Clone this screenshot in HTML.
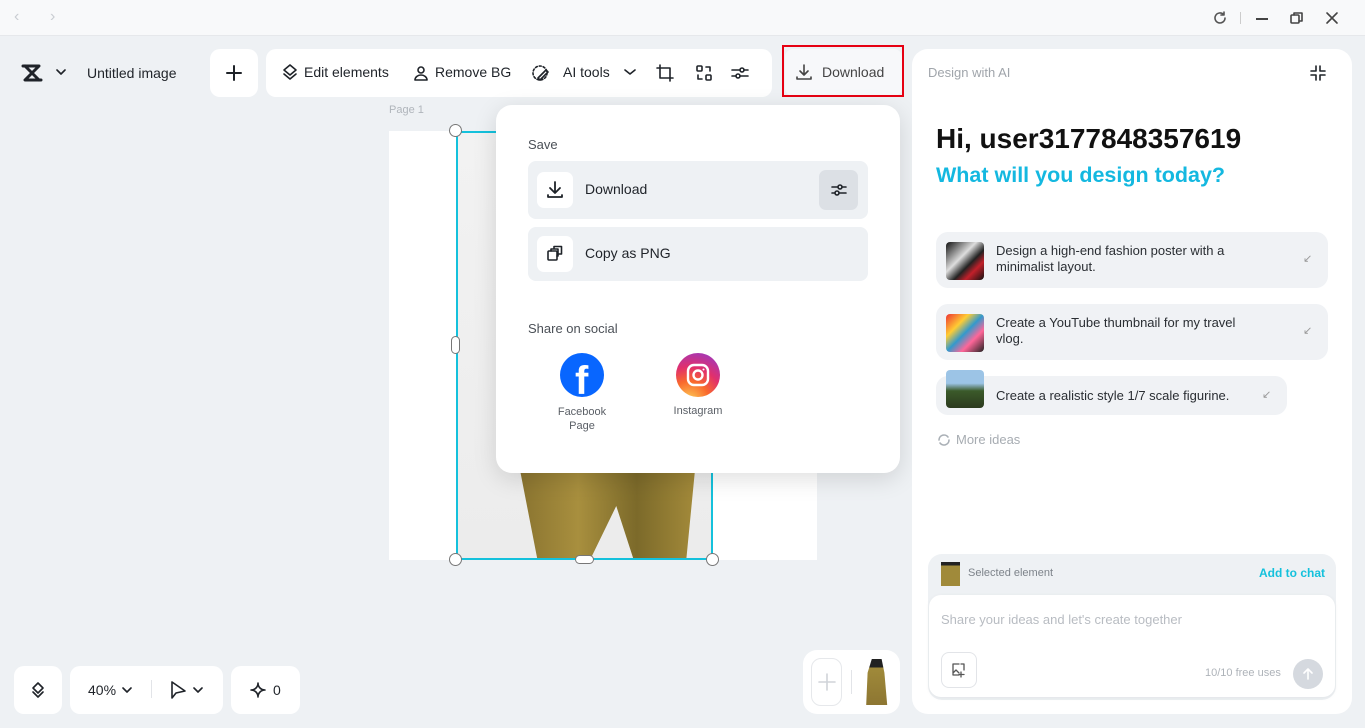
<!DOCTYPE html>
<html><head><meta charset="utf-8"><style>
*{box-sizing:border-box;margin:0;padding:0}
body{width:1365px;height:728px;overflow:hidden;background:#eef1f4;font-family:"Liberation Sans",sans-serif;position:relative;color:#1f2329}
.abs{position:absolute}
.card{position:absolute;background:#fff;border-radius:10px}
.t{position:absolute;white-space:nowrap}
svg{position:absolute;fill:none;stroke:#1f2329;stroke-width:1.6;stroke-linecap:round;stroke-linejoin:round}
</style></head><body>
<div class="abs" style="left:0;top:0;width:1365px;height:36px;background:#f8f9fa;border-bottom:1px solid #e6e8eb"></div>
<div class="t" style="left:14px;top:8px;color:#c9cdd2;font-size:16px">‹</div>
<div class="t" style="left:50px;top:8px;color:#c9cdd2;font-size:16px">›</div>
<svg style="left:1212px;top:10px" width="16" height="16" viewBox="0 0 16 16"><path d="M13 8a5 5 0 1 1-1.5-3.6M12 2v3h-3" stroke="#555"/></svg>
<div class="abs" style="left:1240px;top:12px;width:1px;height:12px;background:#ccc"></div>
<div class="abs" style="left:1256px;top:18px;width:12px;height:1.5px;background:#444"></div>
<svg style="left:1289px;top:10px" width="16" height="16" viewBox="0 0 16 16"><rect x="2" y="5" width="8" height="8" rx="1" stroke="#444"/><path d="M5 5V3h8v8h-3" stroke="#444"/></svg>
<svg style="left:1325px;top:11px" width="14" height="14" viewBox="0 0 14 14"><path d="M2 2l10 10M12 2L2 12" stroke="#444"/></svg>

<div class="card" style="left:8px;top:49px;width:188px;height:48px;background:#eef1f4"></div>
<svg style="left:21px;top:64px" width="22" height="18" viewBox="0 0 22 18"><path d="M2 2h16L4 16h16M4 2l14 14" stroke-width="3"/></svg>
<svg style="left:56px;top:68px" width="10" height="8" viewBox="0 0 10 8"><path d="M1 2l4 4 4-4"/></svg>
<div class="t" style="left:87px;top:65px;font-size:14px">Untitled image</div>
<div class="card" style="left:210px;top:49px;width:48px;height:48px"></div>
<svg style="left:225px;top:64px" width="18" height="18" viewBox="0 0 18 18"><path d="M9 2v14M2 9h14" stroke-width="2"/></svg>
<div class="card" style="left:266px;top:49px;width:506px;height:48px"></div>
<svg style="left:281px;top:63px" width="18" height="18" viewBox="0 0 18 18"><path d="M9 2l6 5-6 5-6-5zM3 11l6 5 6-5"/></svg>
<div class="t" style="left:304px;top:64px;font-size:14px">Edit elements</div>
<svg style="left:412px;top:64px" width="18" height="18" viewBox="0 0 18 18"><circle cx="9" cy="6" r="3"/><path d="M3 16c0-3 3-5 6-5s6 2 6 5z"/></svg>
<div class="t" style="left:435px;top:64px;font-size:14px">Remove BG</div>
<svg style="left:531px;top:63px" width="20" height="20" viewBox="0 0 20 20"><circle cx="9" cy="10" r="7" stroke-dasharray="2 2"/><path d="M7 15l8-8 2 2-8 8z"/></svg>
<div class="t" style="left:563px;top:64px;font-size:14px">AI tools</div>
<svg style="left:624px;top:68px" width="12" height="8" viewBox="0 0 12 8"><path d="M1 2l5 4 5-4"/></svg>
<svg style="left:655px;top:63px" width="20" height="20" viewBox="0 0 20 20"><path d="M5 2v13h13M2 5h13v13"/></svg>
<svg style="left:694px;top:63px" width="20" height="20" viewBox="0 0 20 20"><rect x="3" y="3" width="5" height="5" rx="1"/><rect x="12" y="12" width="5" height="5" rx="1"/><path d="M12 4h4v4M8 16H4v-4"/></svg>
<svg style="left:730px;top:63px" width="20" height="20" viewBox="0 0 20 20"><path d="M2 7h16M2 13h16"/><circle cx="12" cy="7" r="2" fill="#fff"/><circle cx="8" cy="13" r="2" fill="#fff"/></svg>
<div class="abs" style="left:785px;top:49px;width:117px;height:47px;background:#f7f8fa;border-radius:8px"></div>
<div class="abs" style="left:782px;top:45px;width:122px;height:52px;border:2px solid #e60012"></div>
<svg style="left:795px;top:63px" width="18" height="18" viewBox="0 0 18 18"><path d="M9 2v10M5 8l4 4 4-4M2 14v2h14v-2" stroke="#444"/></svg>
<div class="t" style="left:822px;top:64px;font-size:14px;color:#444">Download</div>

<div class="t" style="left:389px;top:104px;font-size:11px;color:#b0b5bb">Page 1</div>
<div class="abs" style="left:389px;top:131px;width:428px;height:429px;background:#fff"></div>
<div class="abs" style="left:456px;top:131px;width:257px;height:429px;background:linear-gradient(#f2f2f2,#ececec)"></div>
<div class="abs" style="left:520px;top:470px;width:175px;height:90px;background:linear-gradient(90deg,#8a7430,#a88f3e,#7c6a2a,#a38a3a);clip-path:polygon(0 0,100% 0,95% 100%,65% 100%,55% 40%,40% 100%,10% 100%)"></div>
<div class="abs" style="left:456px;top:131px;width:257px;height:429px;border:2px solid #14c1dc"></div>
<div class="abs" style="left:449px;top:124px;width:13px;height:13px;border-radius:50%;background:#fff;border:1.5px solid #777"></div>
<div class="abs" style="left:449px;top:553px;width:13px;height:13px;border-radius:50%;background:#fff;border:1.5px solid #777"></div>
<div class="abs" style="left:706px;top:553px;width:13px;height:13px;border-radius:50%;background:#fff;border:1.5px solid #777"></div>
<div class="abs" style="left:451px;top:336px;width:9px;height:18px;border-radius:5px;background:#fff;border:1.5px solid #777"></div>
<div class="abs" style="left:575px;top:555px;width:19px;height:9px;border-radius:5px;background:#fff;border:1.5px solid #777"></div>

<div class="abs" style="left:496px;top:105px;width:404px;height:368px;background:#fff;border-radius:16px;box-shadow:0 6px 24px rgba(0,0,0,.13)"></div>
<div class="t" style="left:528px;top:137px;font-size:13px;color:#4b5057">Save</div>
<div class="abs" style="left:528px;top:161px;width:340px;height:58px;background:#eef1f4;border-radius:8px"></div>
<div class="abs" style="left:537px;top:172px;width:36px;height:36px;background:#fff;border-radius:7px"></div>
<svg style="left:545px;top:180px" width="20" height="20" viewBox="0 0 20 20"><path d="M10 2v11M5 8l5 5 5-5M3 15v2h14v-2" stroke-width="1.8"/></svg>
<div class="t" style="left:585px;top:181px;font-size:14px">Download</div>
<div class="abs" style="left:819px;top:170px;width:39px;height:40px;background:#dce0e5;border-radius:7px"></div>
<svg style="left:829px;top:180px" width="20" height="20" viewBox="0 0 20 20"><path d="M3 7h14M3 13h14"/><circle cx="11" cy="7" r="2" fill="#dce0e5"/><circle cx="8" cy="13" r="2" fill="#dce0e5"/></svg>
<div class="abs" style="left:528px;top:227px;width:340px;height:54px;background:#eef1f4;border-radius:8px"></div>
<div class="abs" style="left:537px;top:236px;width:36px;height:36px;background:#fff;border-radius:7px"></div>
<svg style="left:546px;top:245px" width="18" height="18" viewBox="0 0 18 18"><rect x="2" y="6" width="9" height="9" rx="1"/><path d="M5 6V4h7v7h-1M8 3V1.5h7.5V9H12"/></svg>
<div class="t" style="left:585px;top:245px;font-size:14px">Copy as PNG</div>
<div class="t" style="left:528px;top:321px;font-size:13px;color:#4b5057">Share on social</div>
<div class="abs" style="left:560px;top:353px;width:44px;height:44px;border-radius:50%;background:#0866ff;overflow:hidden"><div class="t" style="left:15px;top:6px;font-size:40px;line-height:44px;font-weight:bold;color:#fff">f</div></div>
<div class="abs" style="left:676px;top:353px;width:44px;height:44px;border-radius:50%;background:radial-gradient(circle at 30% 110%,#fdd35a 0%,#f96a2c 35%,#e1306c 60%,#8c3bd3 100%)"></div>
<svg style="left:685px;top:362px" width="26" height="26" viewBox="0 0 26 26"><rect x="3" y="3" width="20" height="20" rx="6" stroke="#fff" stroke-width="2.4"/><circle cx="13" cy="13" r="4.5" stroke="#fff" stroke-width="2.4"/><circle cx="18.5" cy="7.5" r="1" fill="#fff" stroke="none"/></svg>
<div class="t" style="left:552px;top:405px;width:60px;text-align:center;font-size:11px;line-height:14px;color:#5a5f66;white-space:normal">Facebook Page</div>
<div class="t" style="left:668px;top:405px;width:60px;text-align:center;font-size:11px;color:#5a5f66">Instagram</div>

<div class="card" style="left:14px;top:666px;width:48px;height:48px"></div>
<svg style="left:29px;top:681px" width="18" height="18" viewBox="0 0 18 18"><path d="M9 2l5 5-5 5-5-5zM4 11l5 5 5-5"/></svg>
<div class="card" style="left:70px;top:666px;width:153px;height:48px"></div>
<div class="t" style="left:88px;top:682px;font-size:14px">40%</div>
<svg style="left:122px;top:686px" width="10" height="8" viewBox="0 0 10 8"><path d="M1 2l4 4 4-4"/></svg>
<div class="abs" style="left:151px;top:680px;width:1px;height:18px;background:#e2e4e8"></div>
<svg style="left:169px;top:680px" width="18" height="20" viewBox="0 0 18 20"><path d="M3 2v16l4-5 9-2z"/></svg>
<svg style="left:193px;top:686px" width="10" height="8" viewBox="0 0 10 8"><path d="M1 2l4 4 4-4"/></svg>
<div class="card" style="left:231px;top:666px;width:69px;height:48px"></div>
<svg style="left:250px;top:682px" width="16" height="16" viewBox="0 0 16 16"><path d="M8 1c0 4 3 7 7 7-4 0-7 3-7 7 0-4-3-7-7-7 4 0 7-3 7-7z"/></svg>
<div class="t" style="left:273px;top:682px;font-size:14px">0</div>
<div class="card" style="left:803px;top:650px;width:97px;height:64px;border-radius:14px"></div>
<div class="abs" style="left:811px;top:658px;width:31px;height:48px;border:1px solid #e6e8eb;border-radius:10px"></div>
<svg style="left:817px;top:672px" width="20" height="20" viewBox="0 0 20 20"><path d="M10 2v16M2 10h16" stroke="#d0d4d9"/></svg>
<div class="abs" style="left:851px;top:670px;width:1px;height:24px;background:#e2e4e8"></div>
<div class="abs" style="left:862px;top:659px;width:28px;height:46px;background:linear-gradient(#222 0 18%,#a08a3a 18%,#8d7632);border-radius:3px 3px 0 0;clip-path:polygon(35% 0,70% 0,80% 30%,90% 100%,15% 100%,20% 30%)"></div>

<div class="abs" style="left:912px;top:49px;width:440px;height:665px;background:#fff;border-radius:16px"></div>
<div class="t" style="left:928px;top:65px;font-size:13px;color:#a0a5ab">Design with AI</div>
<svg style="left:1309px;top:64px" width="18" height="18" viewBox="0 0 18 18"><path d="M7 2v5H2M11 2v5h5M7 16v-5H2M11 16v-5h5"/></svg>
<div class="t" style="left:936px;top:123px;font-size:28px;font-weight:bold;color:#111">Hi, user3177848357619</div>
<div class="t" style="left:936px;top:163px;font-size:21.5px;font-weight:bold;color:#14b8e0">What will you design today?</div>

<div class="abs" style="left:936px;top:232px;width:392px;height:56px;background:#f0f2f5;border-radius:12px"></div>
<div class="abs" style="left:946px;top:242px;width:38px;height:38px;border-radius:4px;background:linear-gradient(135deg,#111,#ddd 40%,#222 60%,#c2202a 75%,#111)"></div>
<div class="t" style="left:996px;top:243px;font-size:13px;line-height:16px;color:#2a2e33">Design a high-end fashion poster with a<br>minimalist layout.</div>
<div class="t" style="left:1303px;top:252px;font-size:11px;color:#999">↙</div>
<div class="abs" style="left:936px;top:304px;width:392px;height:56px;background:#f0f2f5;border-radius:12px"></div>
<div class="abs" style="left:946px;top:314px;width:38px;height:38px;border-radius:4px;background:linear-gradient(135deg,#e33,#fc3 30%,#39c 50%,#f69 70%,#222)"></div>
<div class="t" style="left:996px;top:315px;font-size:13px;line-height:16px;color:#2a2e33">Create a YouTube thumbnail for my travel<br>vlog.</div>
<div class="t" style="left:1303px;top:324px;font-size:11px;color:#999">↙</div>
<div class="abs" style="left:936px;top:376px;width:351px;height:39px;background:#f0f2f5;border-radius:12px"></div>
<div class="abs" style="left:946px;top:370px;width:38px;height:38px;border-radius:4px;background:linear-gradient(#9cc4e6 0 35%,#3b5a2a 55%,#2c3a1e)"></div>
<div class="t" style="left:996px;top:388px;font-size:13px;color:#2a2e33">Create a realistic style 1/7 scale figurine.</div>
<div class="t" style="left:1262px;top:388px;font-size:11px;color:#999">↙</div>
<svg style="left:937px;top:433px" width="14" height="14" viewBox="0 0 14 14"><path d="M12 7a5 5 0 0 1-9 3M2 7a5 5 0 0 1 9-3" stroke="#aab0b6"/></svg>
<div class="t" style="left:956px;top:432px;font-size:13px;color:#a7acb2">More ideas</div>

<div class="abs" style="left:928px;top:554px;width:408px;height:146px;background:#eef1f4;border-radius:14px"></div>
<div class="abs" style="left:941px;top:562px;width:19px;height:24px;background:linear-gradient(#222 0 15%,#a08a3a 15%)"></div>
<div class="t" style="left:968px;top:567px;font-size:11px;color:#7d838a">Selected element</div>
<div class="t" style="left:1259px;top:566px;font-size:12px;font-weight:bold;color:#14c1dc">Add to chat</div>
<div class="abs" style="left:929px;top:595px;width:406px;height:102px;background:#fff;border-radius:12px;box-shadow:0 1px 4px rgba(0,0,0,.06)"></div>
<div class="t" style="left:941px;top:612px;font-size:13px;color:#b8bcc2">Share your ideas and let's create together</div>
<div class="abs" style="left:941px;top:652px;width:36px;height:36px;border:1px solid #e2e4e8;border-radius:8px"></div>
<svg style="left:951px;top:662px" width="16" height="16" viewBox="0 0 16 16"><path d="M8 2H2v11h6M2 11l3-3 3 3M10 10v5M8 12.5h5M13 8V2h-3" stroke="#555" stroke-width="1.3"/></svg>
<div class="t" style="left:1205px;top:667px;font-size:11px;color:#aeb3b9">10/10 free uses</div>
<div class="abs" style="left:1293px;top:659px;width:30px;height:30px;border-radius:50%;background:#d5d9df"></div>
<svg style="left:1301px;top:667px" width="14" height="14" viewBox="0 0 14 14"><path d="M7 12V2M3 6l4-4 4 4" stroke="#fff"/></svg>
</body></html>
